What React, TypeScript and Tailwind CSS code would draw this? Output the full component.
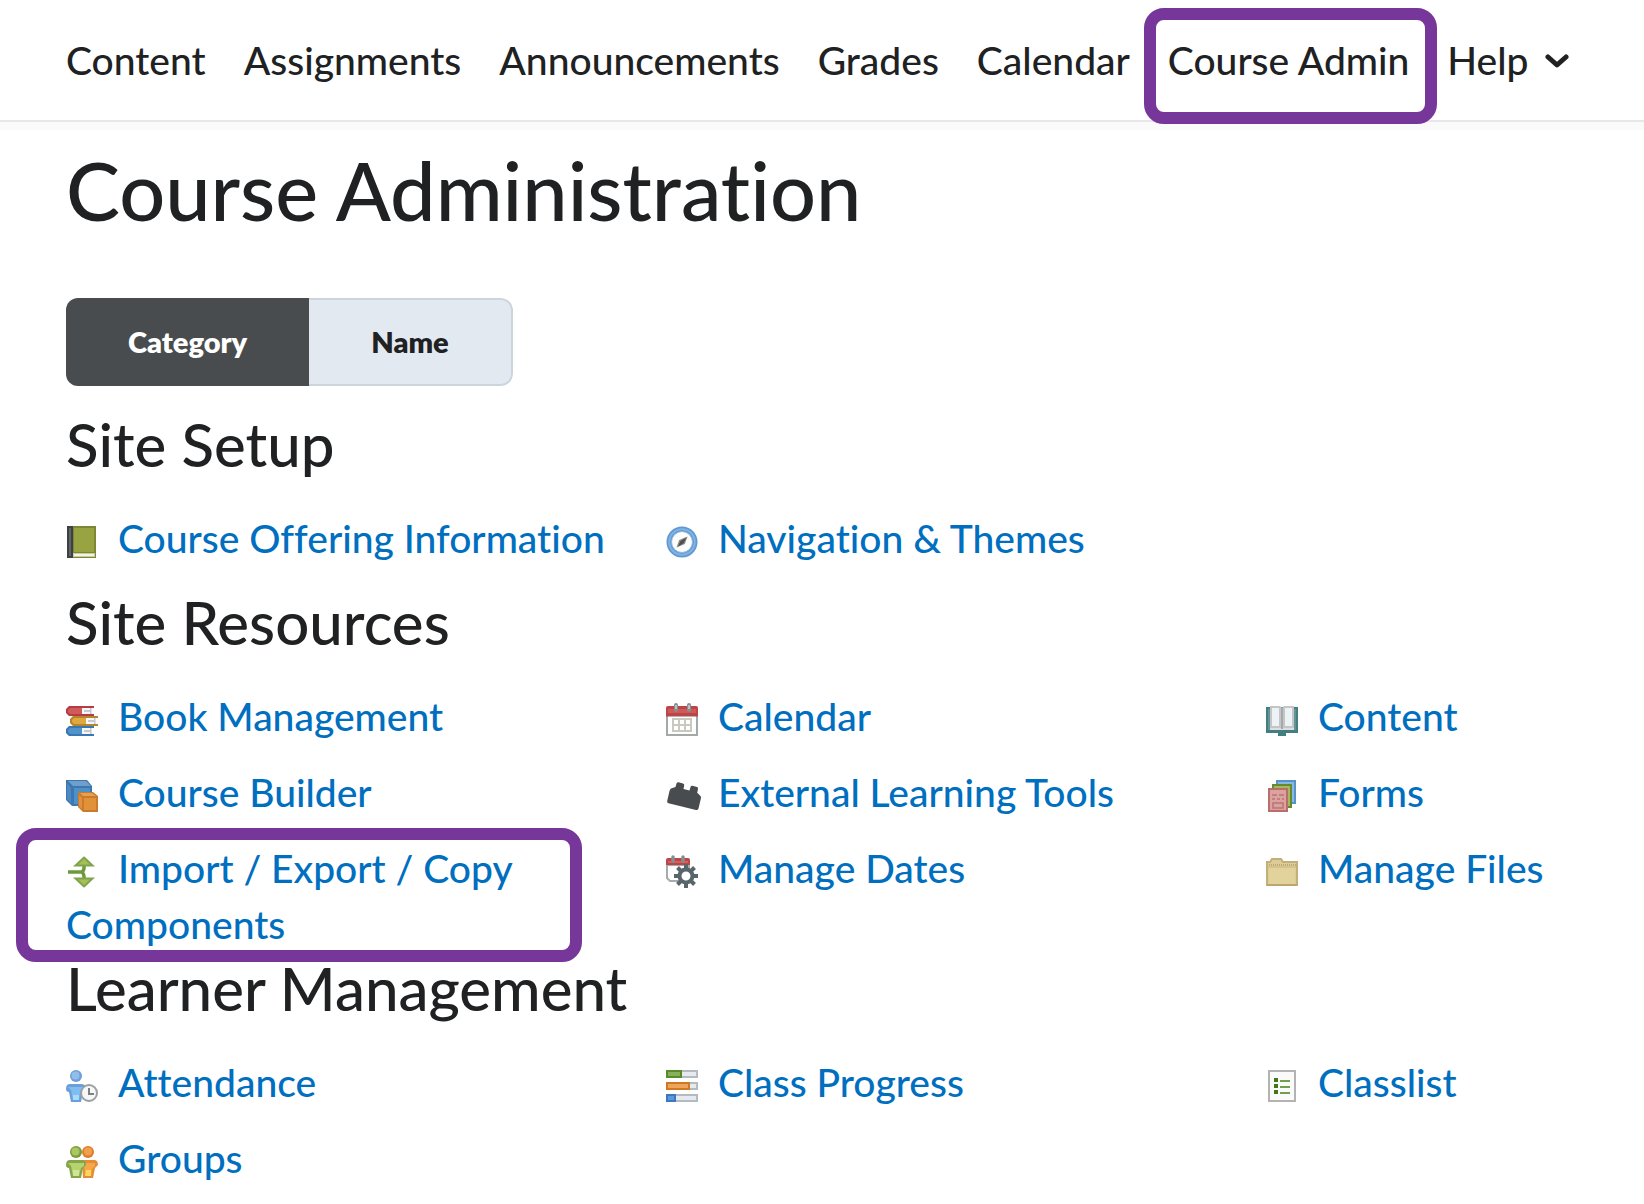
import type { ReactNode } from 'react';

type Tool = {
  name: string;
  icon: ReactNode;
  highlighted?: boolean;
};

type Section = {
  title: string;
  tools: Tool[];
};

function Icon({ children }: { children: ReactNode }) {
  return (
    <svg viewBox="0 0 32 32" aria-hidden="true" className="inline-block w-8 h-8 mr-5 align-[-5px] overflow-visible">
      {children}
    </svg>
  );
}

const greenBook = (
  <Icon>
    <rect x="2" width="28" height="32" fill="#7d8734" />
    <rect x="8" y="2" width="20" height="24" fill="#98a441" />
    <rect x="1" width="6" height="32" fill="#3c4144" />
    <rect x="3" y="2" width="2" height="28" fill="#5e6467" />
    <rect x="7" y="27" width="22" height="4" fill="#c9cc9b" />
    <rect x="8" y="28" width="20" height="2" fill="#f3f3ea" />
  </Icon>
);

const compass = (
  <Icon>
    <circle cx="16" cy="16" r="15.5" fill="#5f98d2" />
    <circle cx="16" cy="16" r="12.8" fill="none" stroke="#80b3e3" strokeWidth="2" />
    <circle cx="16" cy="16" r="10.5" fill="#fdfdfd" stroke="#8fb5dc" strokeWidth="1" />
    <path d="M21.500 10.500 18.800 18 10.500 21.500 13.200 14Z" fill="#8a8a8a" />
    <path d="M20.500 11.500 17.500 17.200 12 20.500 14.500 15Z" fill="#4f4f4f" />
  </Icon>
);

const books = (
  <Icon>
    <path d="M3 2H28V4H26V10H28V12H3L0 9V5Z" fill="#b53c40" />
    <path d="M4 4H17V10H4L2 8V6Z" fill="#cf5b5b" />
    <rect x="16" y="4" width="10" height="6" fill="#f4f6f8" />
    <path d="M18 6h6v2h-6zM24 4h1.500v6H24z" fill="#c4cad0" />
    <path d="M7 12H32V14H30V20H32V22H7L4 19V15Z" fill="#b98528" />
    <path d="M8 14H20V20H8L6 18V16Z" fill="#dda940" />
    <rect x="20" y="14" width="10" height="6" fill="#f4f6f8" />
    <path d="M22 16h6v2h-6zM28 14h1.500v6H28z" fill="#c4cad0" />
    <path d="M3 22H28V24H26V30H28V32H3L0 29V25Z" fill="#3a76b0" />
    <path d="M4 24H17V30H4L2 28V26Z" fill="#5094ca" />
    <rect x="16" y="24" width="10" height="6" fill="#f4f6f8" />
    <path d="M18 26h6v2h-6zM24 24h1.500v6H24z" fill="#c4cad0" />
  </Icon>
);

const cubes = (
  <Icon>
    <path d="M0 0H21L26 6V26H6L0 20Z" fill="#3b77b3" />
    <path d="M2 1H20L25 6H7Z" fill="#6f9fca" />
    <path d="M1 3 5 8V23L1 19Z" fill="#4e88be" />
    <rect x="8" y="8" width="16" height="16" fill="#4e92c5" />
    <path d="M12 12H27L32 16V32H17L12 27Z" fill="#c97a2a" />
    <path d="M14 13H26L30 16H17Z" fill="#e2a05a" />
    <path d="M13 15 16 18V29L13 26Z" fill="#df913f" />
    <rect x="18" y="18" width="12" height="12" fill="#e19138" />
  </Icon>
);

const transferArrows = (
  <Icon>
    <path d="M2 16H16M18 9V12.500Q18 14 16 16Q18 18 18 20V23" fill="none" stroke="#6f9a3b" strokeWidth="3.500" />
    <path d="M18 1.500 26.500 9.500H9.500Z" fill="#a9bd58" stroke="#7ea549" strokeWidth="2" />
    <path d="M18 30.500 26.500 22.500H9.500Z" fill="#a9bd58" stroke="#7ea549" strokeWidth="2" />
  </Icon>
);

const calendar = (
  <Icon>
    <rect x="1" y="11" width="30" height="20" fill="#fff" stroke="#a3a8a9" strokeWidth="2" />
    <path d="M0 4Q0 2 2 2H30Q32 2 32 4V12H0Z" fill="#bd4546" />
    <path d="M2 5H30V9H2Z" fill="#ce5a59" />
    <path d="M0 12H32" stroke="#9b5554" strokeWidth="1" />
    <path d="M10 1V6M23 1V6" stroke="#858e90" strokeWidth="4" strokeLinecap="round" />
    <path d="M10 1V5M23 1V5" stroke="#cdd2d3" strokeWidth="1.500" />
    <path d="M7 15H25V27H7ZM7 21H25M13 15V27M19 15V27" fill="none" stroke="#c9c9c0" strokeWidth="2" />
  </Icon>
);

const brick = (
  <Icon>
    <path
      d="M5 8.500 9.500 7 10.500 3.500Q11 2 12.500 2.200L17 3.400Q18.500 4 18.200 5.500L17.500 9 23.500 10.500 24.500 7Q25 5.500 26.500 5.800L31 7Q32.500 7.500 32 9L31.200 12.800 34 15.500Q35.300 16.500 35 18L32.500 28.500Q32 30.200 30 30L2.500 23.200Q.8 22.700 1.200 21L3.500 11Q4 9 5 8.500Z"
      fill="#494c4e"
    />
  </Icon>
);

const calendarGear = (
  <Icon>
    <path d="M1 9H23V25H4L1 22Z" fill="#fff" stroke="#a7abac" strokeWidth="2" />
    <path d="M0 4Q0 2 2 2H22Q24 2 24 4V9H0Z" fill="#bd4546" />
    <path d="M2 5H22V7H2Z" fill="#cf6160" />
    <path d="M7 1V5M17 1V5" stroke="#858e90" strokeWidth="3.500" strokeLinecap="round" />
    <path
      d="M20 8V32M8 20H32M11.500 11.500 28.500 28.500M28.500 11.500 11.500 28.500"
      stroke="#58656a"
      strokeWidth="4"
    />
    <circle cx="20" cy="20" r="6.500" fill="#fff" stroke="#58656a" strokeWidth="4" />
    <circle cx="20" cy="20" r="3.500" fill="#fff" />
  </Icon>
);

const openBook = (
  <Icon>
    <path d="M0 3H32V29H20V32H12V29H0Z" fill="#437e81" />
    <path d="M2 5H30V26H2Z" fill="#629496" />
    <path d="M4 2H14L16 4 18 2H28V25H4Z" fill="#c3c5c7" />
    <path d="M6 4H13V22H6ZM19 4H26V22H19Z" fill="#edf2f6" />
    <path d="M4 25H28" stroke="#dcdedf" strokeWidth="2" />
    <path d="M16 4V25" stroke="#a6a8aa" strokeWidth="2" />
  </Icon>
);

const forms = (
  <Icon>
    <rect x="11" y="1" width="18" height="22" fill="#83bbe5" stroke="#5a91c6" strokeWidth="2" />
    <rect x="7" y="5" width="18" height="22" fill="#a5b95a" stroke="#66882f" strokeWidth="2" />
    <rect x="3" y="9" width="18" height="22" fill="#dba2a0" stroke="#b96e6c" strokeWidth="2" />
    <path d="M6 15h5m2 0h5M6 19h3m2 0h3m2 0h2" stroke="#b97473" strokeWidth="1.500" />
    <rect x="7" y="23" width="10" height="5" fill="none" stroke="#b97473" strokeWidth="1.500" />
  </Icon>
);

const folder = (
  <Icon>
    <path d="M1 29V6H4L6 3H15L17 6H31V29Z" fill="#ddcc97" stroke="#c3b078" strokeWidth="2" />
    <path d="M3 9H30" stroke="#bda974" strokeWidth="2" strokeDasharray="1 1" />
    <rect x="3" y="12" width="26" height="16" fill="#e2d39d" />
    <path d="M2 11H30" stroke="#cbb981" strokeWidth="1" />
    <path d="M1 29H31" stroke="#bda66a" strokeWidth="2" />
  </Icon>
);

const attendance = (
  <Icon>
    <circle cx="10" cy="6" r="6" fill="#6d9fd9" />
    <circle cx="9.500" cy="5.500" r="4" fill="#91bdeb" />
    <path d="M0 19Q0 14 4 14H15Q20 14 20 19L17 22 15 32H5L3 22Q0 22 0 19Z" fill="#6a9fda" />
    <path d="M2 17H17V20L14 22 13 30H7L5 20Z" fill="#82bdf0" />
    <path d="M7 25H13V30H7Z" fill="#a8dbfb" />
    <circle cx="23" cy="23" r="8" fill="#f6f7f7" stroke="#9ba0a4" strokeWidth="2" />
    <path d="M23 18V24H28" fill="none" stroke="#7b8084" strokeWidth="2" />
  </Icon>
);

const groups = (
  <Icon>
    <circle cx="22" cy="6" r="6" fill="#df7e2a" />
    <circle cx="22" cy="5.500" r="4" fill="#f0a04f" />
    <path d="M16 14H28Q32 14 32 19L29 22 27 32H17Z" fill="#e58c36" />
    <path d="M18 17H29V20L26 23 25 30H19Z" fill="#f5a848" />
    <path d="M20 24H25V30H19Z" fill="#ffd45f" />
    <circle cx="10" cy="6" r="6" fill="#7c9d3a" />
    <circle cx="9.500" cy="5.500" r="4" fill="#aac764" />
    <path d="M0 19Q0 14 4 14H16Q20 14 20 19L17 22 15 32H5L3 22Q0 22 0 19Z" fill="#86a548" />
    <path d="M2 17H18V20L15 22 13 30H7L5 20Z" fill="#b6d372" />
    <path d="M7 24H13V30H7Z" fill="#d1e695" />
  </Icon>
);

const progressBars = (
  <Icon>
    <path d="M1 1H31V7H1ZM1 13H31V19H1ZM1 25H31V31H1Z" fill="#e6eaee" stroke="#b3bbc1" strokeWidth="2" />
    <rect x="1" y="1" width="14" height="6" fill="#87b05b" stroke="#5b8a2d" strokeWidth="2" />
    <rect x="1" y="13" width="22" height="6" fill="#eea45a" stroke="#d07925" strokeWidth="2" />
    <rect x="1" y="25" width="8" height="6" fill="#5c99dc" stroke="#3c78c0" strokeWidth="2" />
  </Icon>
);

const classlist = (
  <Icon>
    <rect x="3" y="1" width="26" height="30" fill="#fafafa" stroke="#b3b3b3" strokeWidth="2" />
    <path d="M8 8h4v4H8zM8 14h4v4H8zM8 20h4v4H8z" fill="#437519" />
    <path d="M14 11H24M14 17H24M14 23H24" stroke="#70a04a" strokeWidth="2" />
  </Icon>
);

const navItems = ['Content', 'Assignments', 'Announcements', 'Grades', 'Calendar', 'Course Admin'];

const sections: Section[] = [
  {
    title: 'Site Setup',
    tools: [
      { name: 'Course Offering Information', icon: greenBook },
      { name: 'Navigation & Themes', icon: compass },
    ],
  },
  {
    title: 'Site Resources',
    tools: [
      { name: 'Book Management', icon: books },
      { name: 'Calendar', icon: calendar },
      { name: 'Content', icon: openBook },
      { name: 'Course Builder', icon: cubes },
      { name: 'External Learning Tools', icon: brick },
      { name: 'Forms', icon: forms },
      { name: 'Import / Export / Copy Components', icon: transferArrows, highlighted: true },
      { name: 'Manage Dates', icon: calendarGear },
      { name: 'Manage Files', icon: folder },
    ],
  },
  {
    title: 'Learner Management',
    tools: [
      { name: 'Attendance', icon: attendance },
      { name: 'Class Progress', icon: progressBars },
      { name: 'Classlist', icon: classlist },
      { name: 'Groups', icon: groups },
    ],
  },
];

export default function App() {
  return (
    <div className="min-h-screen bg-white text-[#202122] font-['Lato',sans-serif] font-medium [font-variant-ligatures:none]">
      {/* Course navbar */}
      <header className="border-b-2 border-[#e6e6eb]">
        <nav className="flex items-center gap-[38px] h-[120px] px-[66px] text-[39px] leading-[46px] whitespace-nowrap">
          {navItems.map((item) => (
            <a key={item} href="#" className="relative">
              {item}
              {item === 'Course Admin' && (
                <span className="absolute -left-6 -right-7 -top-[29px] -bottom-[41px] rounded-[20px] border-12 border-[#773699] pointer-events-none" />
              )}
            </a>
          ))}
          <button type="button" className="flex items-center gap-4">
            Help
            <svg viewBox="0 0 24 16" aria-hidden="true" className="w-6 h-4">
              <path d="M3 5 12 13 21 5" fill="none" stroke="#202122" strokeWidth="5" strokeLinecap="round" strokeLinejoin="round" />
            </svg>
          </button>
        </nav>
      </header>
      <div className="h-2 bg-[#fafafb]" />

      <main className="px-[66px] pt-3">
        <h1 className="text-[81px] leading-[96px]">Course Administration</h1>

        {/* Sort toggle */}
        <div className="flex w-fit mt-[60px] mb-[22px] h-[88px] rounded-xl overflow-hidden text-[29px] font-extrabold">
          <button type="button" aria-pressed="true" className="px-[62px] bg-[#494c4e] text-white">
            Category
          </button>
          <button type="button" aria-pressed="false" className="px-[62px] bg-[#e3e9f1] border-2 border-l-0 border-[#cdd5dc] rounded-r-xl">
            Name
          </button>
        </div>

        {sections.map((section) => (
          <section key={section.title}>
            <h2 className="text-[60px] leading-[72px] mb-[30px]">{section.title}</h2>
            <ul className="grid grid-cols-[25fr_25fr_13fr] text-[39px] leading-[56px] text-[#006fbf]">
              {section.tools.map((tool) => (
                <li key={tool.name} className="relative min-h-[76px]">
                  <a href="#">
                    {tool.icon}
                    {tool.name}
                  </a>
                  {tool.highlighted && (
                    <span className="absolute -left-[50px] right-[84px] -top-3 -bottom-[10px] rounded-[20px] border-12 border-[#773699] pointer-events-none" />
                  )}
                </li>
              ))}
            </ul>
          </section>
        ))}
      </main>
    </div>
  );
}
